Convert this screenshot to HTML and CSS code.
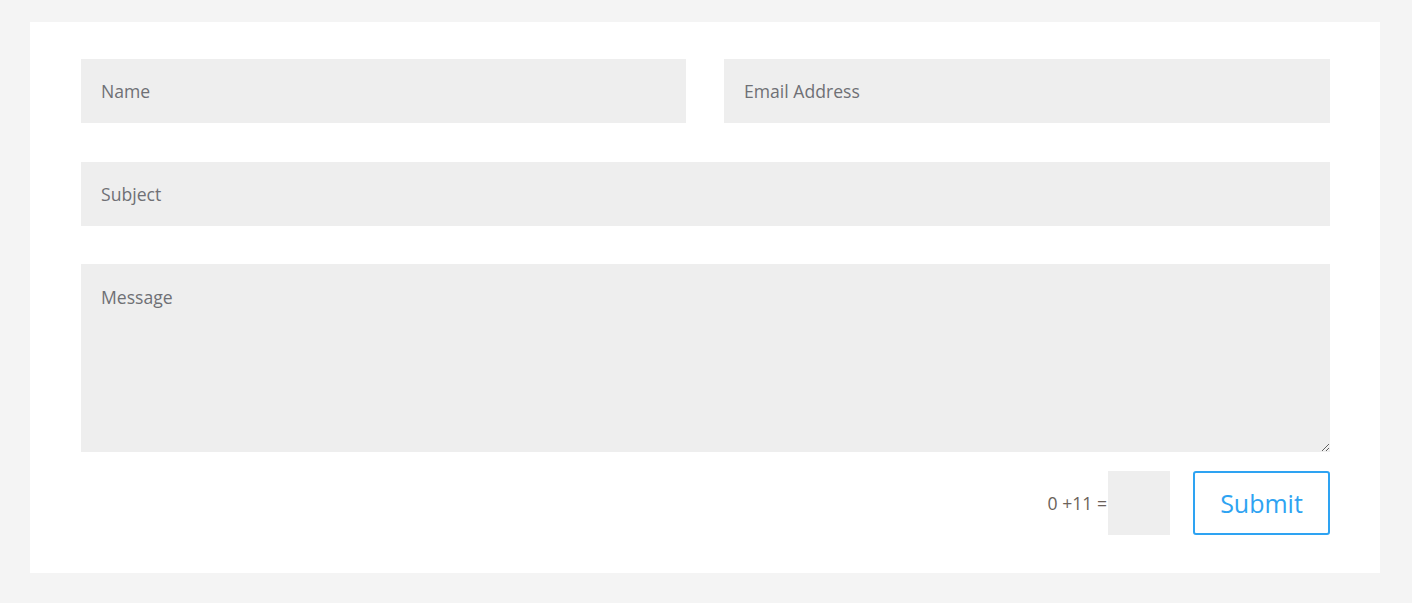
FILE: index.html
```html
<!DOCTYPE html>
<html lang="en">

<head>
    <meta charset="UTF-8">
    <meta name="viewport" content="width=device-width, initial-scale=1.0">
    <title>Contact</title>
    <link rel="stylesheet" href="styles.css">
</head>

<body>
    <div class="contact-box">
        <form class="contact-form" onsubmit="return false">
            <div class="row-half">
                <input type="text" class="field" placeholder="Name">
                <input type="email" class="field" placeholder="Email Address">
            </div>
            <input type="text" class="field" placeholder="Subject">
            <textarea class="field message" placeholder="Message"></textarea>

            <div class="form-footer">
                <span class="captcha-question">0 +11 =</span>
                <input type="text" class="captcha-answer">
                <button type="submit" class="submit-btn">Submit</button>
            </div>
        </form>
    </div>
</body>

</html>
```

FILE: styles.css
```css
body {
    font-family: "Open Sans", Arial, sans-serif;
    margin: 0;
    padding: 22px 32px 30px 30px;
    background-color: #f4f4f4;
}

.contact-box {
    background-color: #ffffff;
    padding: 37px 50px 38px 51px;
}

.contact-form {
    display: flex;
    flex-direction: column;
    gap: 38px;
}

.row-half {
    display: grid;
    grid-template-columns: 605px 1fr;
    gap: 38px;
    margin-bottom: 1px;
}

.field {
    display: block;
    box-sizing: border-box;
    width: 100%;
    height: 64px;
    margin: 0;
    padding: 20px;
    border: none;
    border-radius: 0;
    background-color: #eeeeee;
    font-family: inherit;
    font-size: 17.6px;
    color: #666;
    outline: none;
}

.field::placeholder {
    color: #6f7075;
    opacity: 1;
}

.message {
    height: 188px;
    padding-top: 21px;
    resize: vertical;
}

.form-footer {
    display: flex;
    justify-content: flex-end;
    align-items: center;
    margin-top: -19px;
}

.captcha-question {
    font-size: 17.6px;
    color: #6b625a;
    margin-right: 1px;
}

.captcha-answer {
    box-sizing: border-box;
    width: 62px;
    height: 64px;
    border: none;
    background-color: #eeeeee;
    margin: 0 23px 0 0;
    outline: none;
}

.submit-btn {
    box-sizing: border-box;
    width: 137px;
    height: 64px;
    padding: 0;
    background-color: #ffffff;
    border: 2px solid #2ea3f2;
    border-radius: 3px;
    color: #2ea3f2;
    font-family: inherit;
    font-size: 25px;
    cursor: pointer;
}
```
